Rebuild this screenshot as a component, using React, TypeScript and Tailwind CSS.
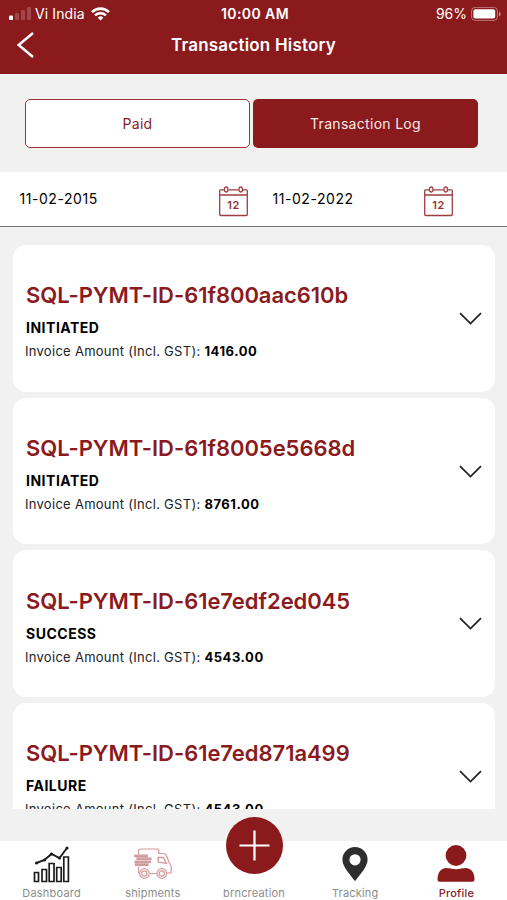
import { ReactNode } from "react";

interface Payment {
    id: string;
    status: string;
    amount: string;
}

const payments: Payment[] = [
    { id: "SQL-PYMT-ID-61f800aac610b", status: "INITIATED", amount: "1416.00" },
    { id: "SQL-PYMT-ID-61f8005e5668d", status: "INITIATED", amount: "8761.00" },
    { id: "SQL-PYMT-ID-61e7edf2ed045", status: "SUCCESS", amount: "4543.00" },
    { id: "SQL-PYMT-ID-61e7ed871a499", status: "FAILURE", amount: "4543.00" },
];

const StatusBar = () => (
    <div className="flex h-7 items-center text-[14px] leading-7">
        <div className="flex flex-1 items-center pl-[9px]">
            <svg className="h-[14px] w-[22px]" viewBox="0 0 22 14" fill="#fff">
                <rect x="0" y="8.5" width="4" height="4.5" rx="1" />
                <rect x="6" y="6" width="4" height="7" rx="1" opacity=".2" />
                <rect x="12" y="3" width="4" height="10" rx="1" opacity=".2" />
                <rect x="18" y="0" width="4" height="13" rx="1" opacity=".2" />
            </svg>
            <span className="ml-1 tracking-[0.1px]">Vi India</span>
            <svg className="ml-[6px] h-[14px] w-[19px]" viewBox="0 0 19 14" fill="none" stroke="#fff" strokeWidth="2.6">
                <path d="M1 5.1a12.2 12.2 0 0 1 17 0" />
                <path d="M4 8.4a7.8 7.8 0 0 1 11 0" />
                <path d="M9.5 13.5 6.7 10.7a4 4 0 0 1 5.6 0z" fill="#fff" stroke="none" />
            </svg>
        </div>
        <span className="font-semibold tracking-[0.4px]">10:00 AM</span>
        <div className="flex flex-1 items-center justify-end pr-[6px]">
            <span>96%</span>
            <svg className="ml-1 h-[15px] w-[30px]" viewBox="0 0 30 15">
                <rect x=".6" y=".4" width="25.8" height="13" rx="3.6" fill="none" stroke="#fff" strokeOpacity=".4" />
                <rect x="2.4" y="2.2" width="21.8" height="9.4" rx="2" fill="#fff" />
                <path d="M28 4.5v5c1-.4 1.6-1.3 1.6-2.5S29 4.9 28 4.5z" fill="#fff" fillOpacity=".5" />
            </svg>
        </div>
    </div>
);

const Calendar = () => (
    <svg className="h-[31px] w-[29px]" viewBox="0 0 29 31" fill="none" stroke="#a03c3f" strokeWidth="1.3">
        <path d="M5.3 3.8H1.6A1 1 0 0 0 .7 4.800V28.500a1 1 0 0 0 1 1h25.600a1 1 0 0 0 1-1V4.800a1 1 0 0 0-1-1H23.700M9.300 3.800H19.700M.7 9H28.300" />
        <rect x="5.5" y="1" width="3.4" height="5" rx="1.7" />
        <rect x="20" y="1" width="3.4" height="5" rx="1.7" />
        <text x="14.5" y="22.6" textAnchor="middle" fill="#983033" stroke="none" className="font-['Inter',sans-serif] text-[11px] font-semibold tracking-[0.4px]">
            12
        </text>
    </svg>
);

const PaymentCard = ({ id, status, amount }: Payment) => (
    <div className="flex h-[146.7px] shrink-0 items-center justify-between rounded-[13px] bg-white px-[13px]">
        <div className="pt-[6px]">
            <h2 className="text-[22px] leading-7 font-semibold tracking-[-0.05px] text-[#8b1a1d]">{id}</h2>
            <p className="mt-[9px] text-[14px] leading-5 font-bold tracking-[0.5px]">{status}</p>
            <p className="mt-[3px] -ml-px text-[13px] leading-5 tracking-[0.28px] text-[#222]">
                Invoice Amount (Incl. GST): <b className="tracking-[0.55px] text-black">{amount}</b>
            </p>
        </div>
        <svg className="h-[13px] w-[23px]" viewBox="0 0 23 13" fill="none" stroke="#222" strokeWidth="1.7">
            <path d="M1 1.2 11.5 11.5 22 1.2" />
        </svg>
    </div>
);

const DashboardIcon = () => (
    <svg className="h-[37px] w-[37px]" viewBox="0 0 37 37" fill="none" stroke="#1c1c1c" strokeWidth="1.7">
        <path d="M1.5 35.5V26.5h4v9zM9 35.5V23.5h4.5v12zM16.2 35.5V17.5h4.8v18zM23.7 35.5V21.5h4.5v14zM30.8 35.5V11h4.600v24.500z" />
        <path d="M3.5 17 11.5 14 18.5 8 26.5 12 34 2" strokeWidth="1.9" />
        <g fill="#1c1c1c" stroke="none">
            <circle cx="3.5" cy="17" r="1.6" />
            <circle cx="11.5" cy="14" r="1.6" />
            <circle cx="18.5" cy="8" r="1.6" />
            <circle cx="26.5" cy="12" r="1.6" />
            <circle cx="34" cy="2" r="1.6" />
        </g>
    </svg>
);

const TruckIcon = () => (
    <svg className="h-[32px] w-[38px]" viewBox="0 0 38 32" fill="none" stroke="#d29a9d" strokeWidth="1.2">
        <path d="M4.5 6.5V3a2 2 0 0 1 2-2h16.800a1.500 1.500 0 0 1 1.500 1.500V5.500h4.500c1.500 0 2.500.8 3.100 2l2.900 7.500 1.300 2c.5.7.7 1.500.7 2.500l-.3 5.500h-3.900M4.500 18.500V24a1.500 1.500 0 0 0 1.400 1.500M15.200 25.500H23" />
        <circle cx="10.4" cy="25.5" r="4.8" />
        <circle cx="10.4" cy="25.5" r="2.6" />
        <circle cx="27.8" cy="25.5" r="4.8" />
        <circle cx="27.8" cy="25.5" r="2.6" />
        <path d="M24.2 9.500h4.300c.8 0 1.300.4 1.600 1l2.200 4.900-8.100-1.500z" strokeWidth="1.4" />
        <path d="M.8 7.200h12.500v1.500H.8zM3 10h14v1.500H3zM1.200 13h15.300v1.500H1.200zM1.500 15.900h12.500v1.500H1.500z" fill="#dba9ac" />
    </svg>
);

const PinIcon = () => (
    <svg className="h-[34px] w-[26px]" viewBox="0 0 26 34" fill="#2e2e2e">
        <path fillRule="evenodd" d="M13 0a12.600 12.600 0 0 1 12.600 12.600c0 4-2 7.400-4.200 10.600L13.800 33.200a1 1 0 0 1-1.600 0L4.600 23.200C2.400 20 .4 16.600.4 12.600A12.600 12.600 0 0 1 13 0zm0 7.200a5.600 5.600 0 1 0 0 11.200 5.600 5.600 0 0 0 0-11.200z" />
    </svg>
);

const ProfileIcon = () => (
    <svg className="h-[37px] w-[38px]" viewBox="0 0 38 37" fill="#8b1a1d">
        <circle cx="19" cy="10.5" r="10.4" />
        <path d="M.5 34.5C.5 28 3.500 23 9.500 23c3 0 5 1.200 9.500 1.200S25.500 23 28.500 23c6 0 9 5 9 11.500 0 1.500-.8 2.200-2.200 2.200H2.700C1.300 36.700.5 36 .5 34.500z" />
    </svg>
);

const PlusButton = () => (
    <div className="mb-[13.5px] flex h-[57px] w-[57px] shrink-0 items-center justify-center rounded-full bg-[#8b1a1d]">
        <svg className="h-[31px] w-[31px]" viewBox="0 0 31 31" stroke="#fff" strokeWidth="2.2">
            <path d="M15.5.5v30M.5 15.5h30" />
        </svg>
    </div>
);

interface TabProps {
    label: string;
    children: ReactNode;
    active?: boolean;
}

const Tab = ({ label, children, active }: TabProps) => (
    <div className="flex w-[101.4px] flex-col items-center justify-end pb-[1px]">
        {children}
        <span className={active ? "text-[11px] leading-3 font-medium tracking-[0.2px] text-[#8b1a1d]" : "text-[11px] leading-3 tracking-[0.2px] text-[#8c8c8c]"}>
            {label}
        </span>
    </div>
);

export default function App() {
    return (
        <div className="flex h-[900px] w-[507px] flex-col overflow-hidden bg-[#f1f1f1] font-['Inter',sans-serif] text-black">
            <header className="h-[74px] shrink-0 bg-[#8b1a1d] text-white">
                <StatusBar />
                <div className="flex h-[34px] items-center pl-[17px]">
                    <svg className="mb-px h-[26px] w-[18px]" viewBox="0 0 18 26" fill="none" stroke="#fff" strokeWidth="2.4">
                        <path d="M16 1 1.7 13 16 25" />
                    </svg>
                    <h1 className="flex-1 pt-px pr-[35px] text-center text-[17px] font-semibold tracking-[0.2px]">Transaction History</h1>
                </div>
            </header>

            {/* Paid / log switch */}
            <div className="flex h-[98px] shrink-0 gap-[3px] px-[25px] pt-[24.5px] text-[14px] tracking-[0.3px]">
                <button className="h-[49px] w-[225px] rounded-[5px] border border-[#9b3235] bg-white text-[#8b1a1d]">Paid</button>
                <button className="h-[49px] w-[225px] rounded-[5px] bg-[#8b1a1d] text-[#fbe9e6]">Transaction Log</button>
            </div>

            {/* Date range */}
            <div className="flex h-[55px] shrink-0 border-b border-[#777] bg-white text-[14px] tracking-[0.55px]">
                <div className="flex w-[253px] items-center justify-between pr-[5px] pl-[19.5px]">
                    <span className="pb-px">11-02-2015</span>
                    <div className="pt-[5px]"><Calendar /></div>
                </div>
                <div className="flex w-[200px] items-center justify-between pl-[19.5px]">
                    <span className="pb-px">11-02-2022</span>
                    <div className="pt-[5px]"><Calendar /></div>
                </div>
            </div>

            <main className="mt-[18px] flex h-[564px] shrink-0 flex-col gap-[6px] overflow-hidden pr-3 pl-[13px]">
                {payments.map((payment) => (
                    <PaymentCard key={payment.id} {...payment} />
                ))}
            </main>

            <nav className="mt-auto flex h-[59px] shrink-0 bg-white pl-px">
                <Tab label="Dashboard"><div className="mb-[4px]"><DashboardIcon /></div></Tab>
                <Tab label="shipments"><div className="mb-[7px]"><TruckIcon /></div></Tab>
                <Tab label="brncreation"><PlusButton /></Tab>
                <Tab label="Tracking"><div className="mb-[6px]"><PinIcon /></div></Tab>
                <Tab label="Profile" active><div className="mb-[5px]"><ProfileIcon /></div></Tab>
            </nav>
        </div>
    );
}
